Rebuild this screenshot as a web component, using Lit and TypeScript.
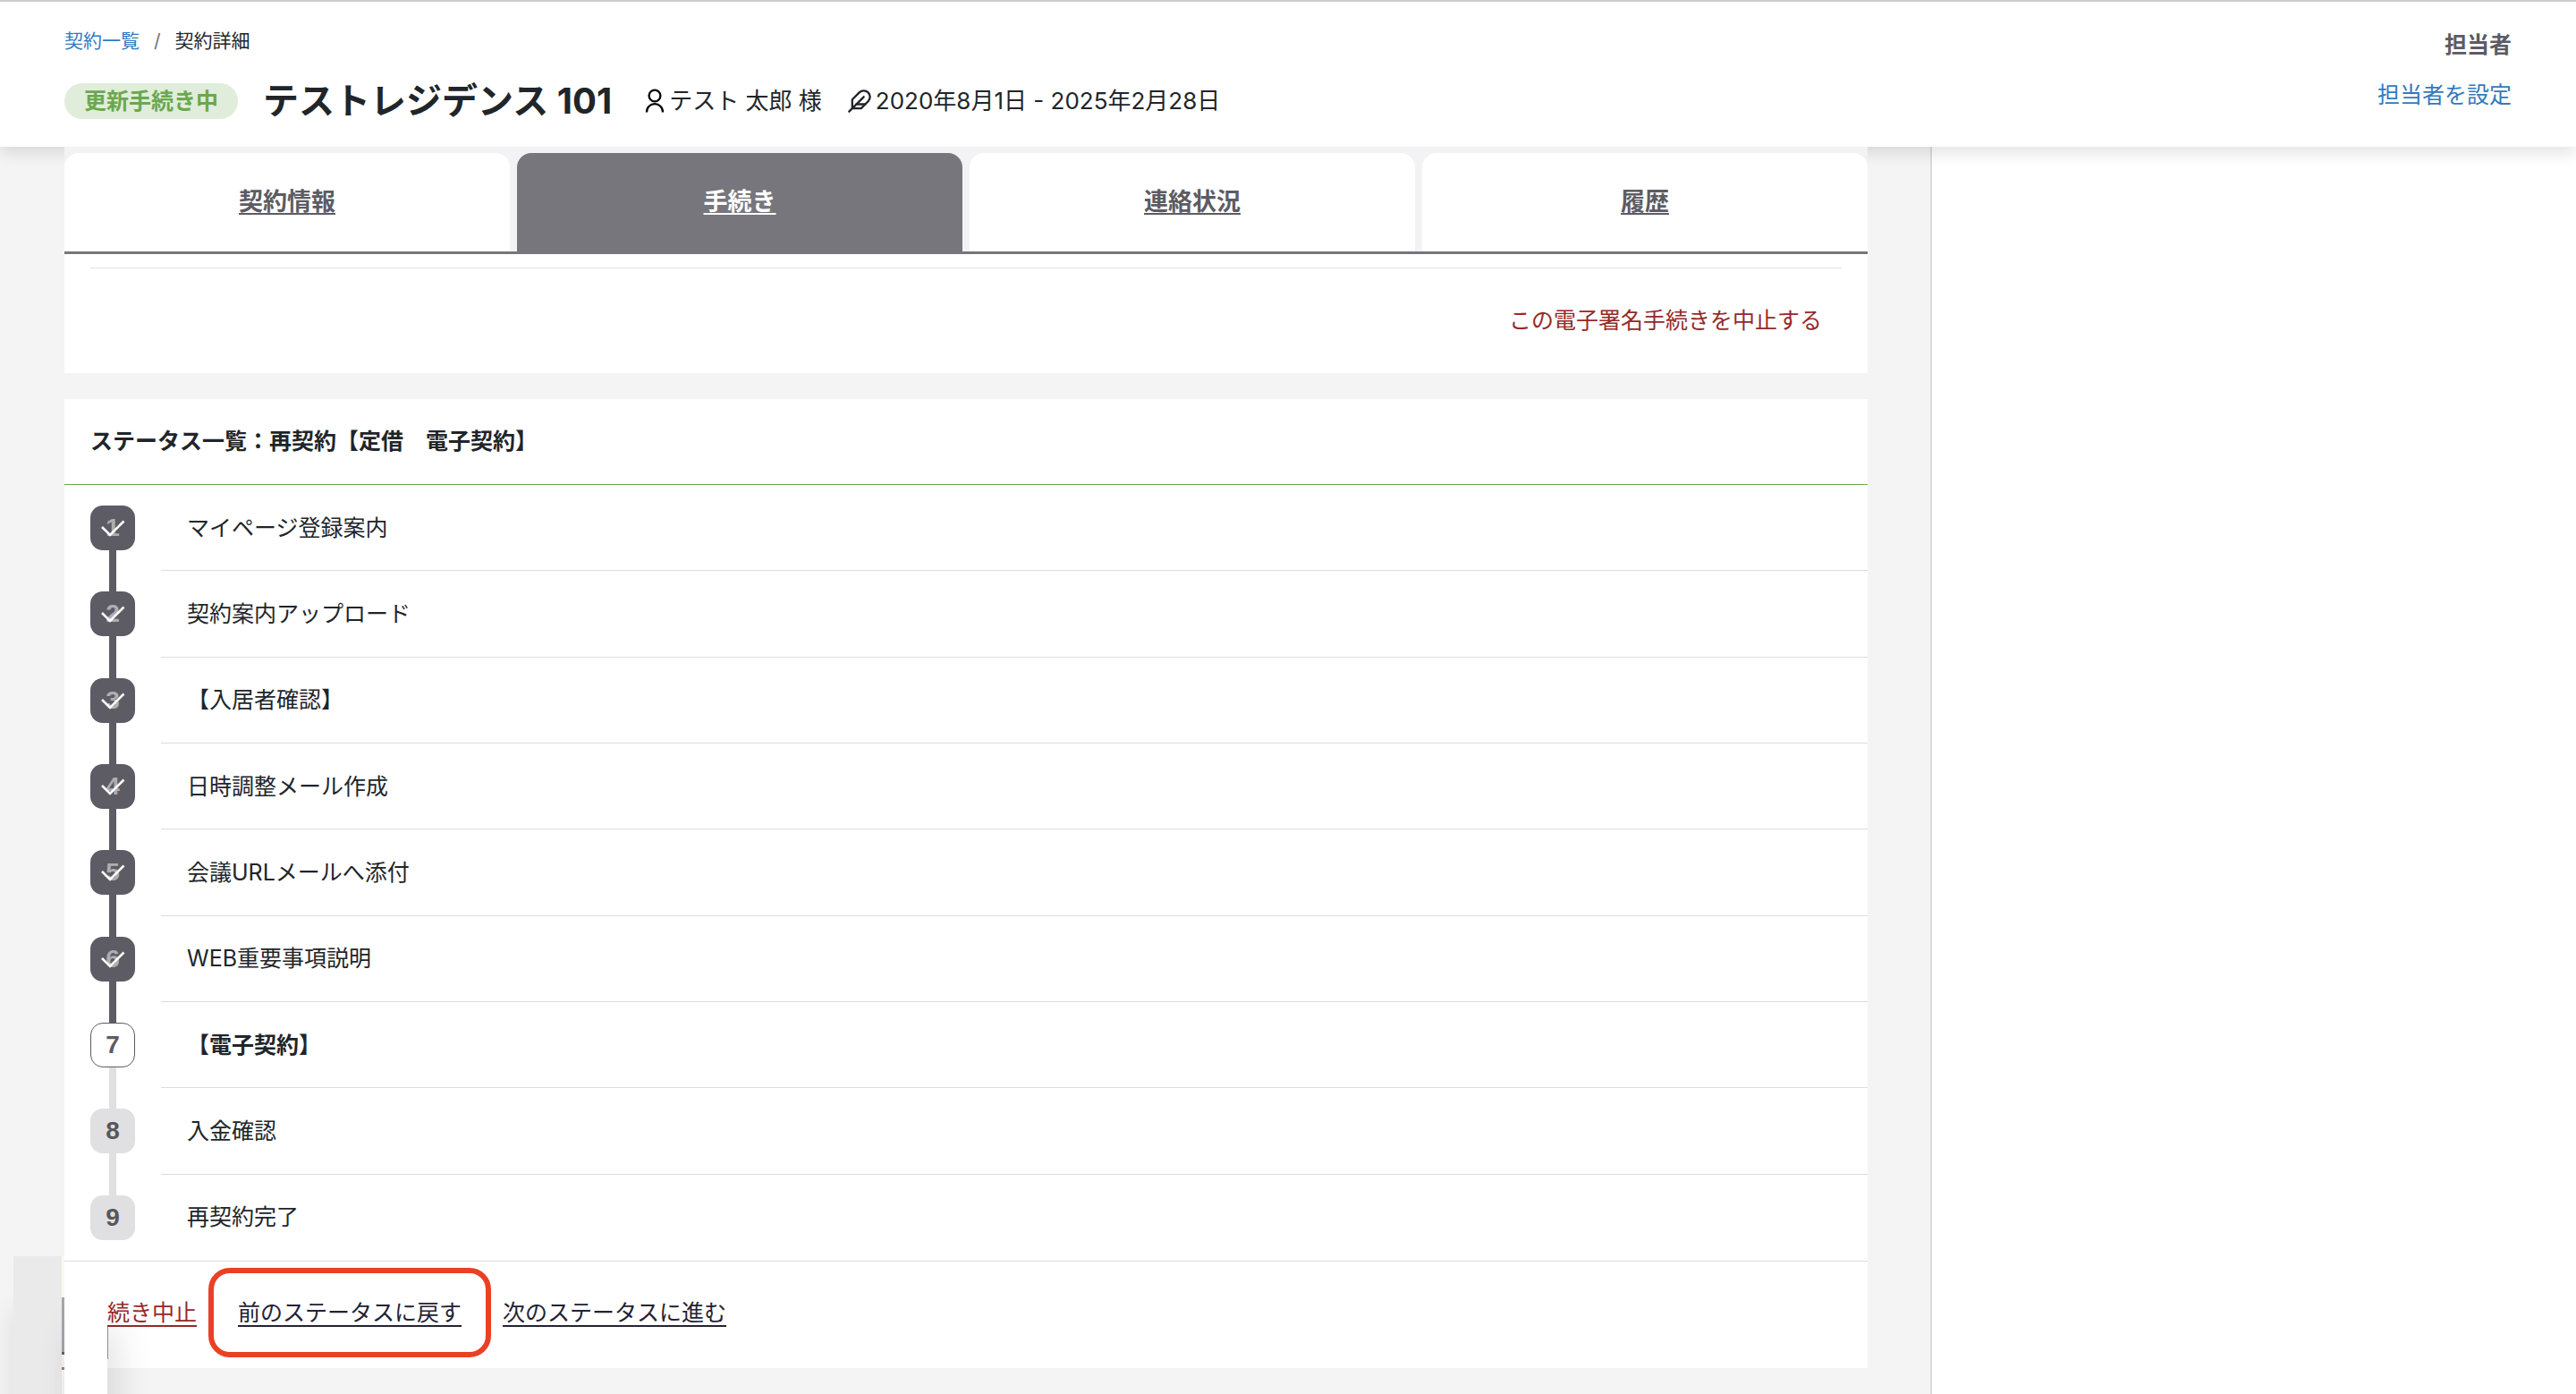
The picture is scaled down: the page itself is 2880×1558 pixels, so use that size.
import { LitElement, html, css, nothing } from "lit";
import { customElement, property } from "lit/decorators.js";
import { classMap } from "lit/directives/class-map.js";

type StepState = "done" | "current" | "todo";

interface Step {
  label: string;
  state: StepState;
}

const STEPS: Step[] = [
  { label: "マイページ登録案内", state: "done" },
  { label: "契約案内アップロード", state: "done" },
  { label: "【入居者確認】", state: "done" },
  { label: "日時調整メール作成", state: "done" },
  { label: "会議URLメールへ添付", state: "done" },
  { label: "WEB重要事項説明", state: "done" },
  { label: "【電子契約】", state: "current" },
  { label: "入金確認", state: "todo" },
  { label: "再契約完了", state: "todo" },
];

const TABS = ["契約情報", "手続き", "連絡状況", "履歴"];

@customElement("contract-header")
class ContractHeader extends LitElement {
  static styles = css`
    :host {
      display: block;
      position: relative;
      z-index: 1;
    }
    .bar {
      display: flex;
      justify-content: space-between;
      box-sizing: border-box;
      padding: 28px 72px 27px;
      border-top: 2px solid #ccc;
      background: #fff;
      box-shadow: 0 8px 16px rgba(0, 0, 0, 0.1);
    }
    .crumbs {
      display: flex;
      gap: 16px;
      margin: 0;
      padding: 0;
      list-style: none;
      font-size: 21px;
      line-height: 32px;
    }
    .crumbs li {
      display: flex;
      gap: 16px;
    }
    .slash {
      color: #6c757d;
    }
    a {
      color: #3379bd;
      text-decoration: none;
    }
    .summary {
      display: flex;
      align-items: center;
      margin-top: 27px;
      line-height: 48px;
    }
    .badge {
      padding: 0 22px;
      border-radius: 20px;
      background: #e0edda;
      color: #6aa84f;
      font-weight: 700;
      line-height: 40px;
    }
    h1 {
      margin: 0 36px 0 28px;
      font-size: 40px;
      line-height: 48px;
    }
    .meta {
      display: flex;
      align-items: center;
      margin-right: 28px;
      font-size: 26px;
    }
    .meta svg {
      display: block;
      margin-right: 4px;
    }
    .owner {
      display: flex;
      flex-direction: column;
      align-items: flex-end;
      gap: 16px;
      line-height: 40px;
    }
    .owner strong {
      color: #5d5b63;
    }
  `;

  render() {
    return html`
      <header class="bar">
        <div>
          <nav aria-label="パンくず">
            <ol class="crumbs">
              <li><a href="#list">契約一覧</a><span class="slash">/</span></li>
              <li>契約詳細</li>
            </ol>
          </nav>
          <div class="summary">
            <span class="badge">更新手続き中</span>
            <h1>テストレジデンス 101</h1>
            <span class="meta">
              <svg width="24" height="28" viewBox="0 0 24 28" fill="none" stroke="#000" stroke-width="2.3" aria-hidden="true">
                <circle cx="12" cy="8" r="6.4" />
                <path d="M3 26.5c0-5.6 4-9.3 9-9.3s9 3.7 9 9.3" />
              </svg>
              テスト 太郎 様
            </span>
            <span class="meta">
              <svg width="28" height="28" viewBox="0 0 24 24" fill="none" stroke="#212529" stroke-width="2" stroke-linecap="round" stroke-linejoin="round" aria-hidden="true">
                <path d="M20.24 12.24a6 6 0 0 0-8.49-8.49L5 10.5V19h8.5z" />
                <path d="M16 8 2 22" />
                <path d="M17.5 15H9" />
              </svg>
              2020年8月1日 - 2025年2月28日
            </span>
          </div>
        </div>
        <div class="owner">
          <strong>担当者</strong>
          <a href="#owner">担当者を設定</a>
        </div>
      </header>
    `;
  }
}

@customElement("contract-tabs")
class ContractTabs extends LitElement {
  static styles = css`
    :host {
      display: block;
      position: relative;
      z-index: 2;
    }
    .tabs {
      display: grid;
      grid-template-columns: repeat(4, 1fr);
      gap: 8px;
      padding-top: 7px;
      border-bottom: 3px solid #77767c;
      background: #f3f3f6;
    }
    a {
      padding: 35px 0;
      border-radius: 16px 16px 0 0;
      background: #fff;
      color: #5d5b63;
      font-size: 27px;
      font-weight: 700;
      line-height: 40px;
      text-align: center;
      text-underline-offset: 3px;
    }
    a.active {
      background: #77767c;
      color: #fff;
    }
  `;

  render() {
    return html`
      <nav class="tabs">
        ${TABS.map(
          (tab, i) => html`<a class=${classMap({ active: i === 1 })} href="#tab${i + 1}">${tab}</a>`
        )}
      </nav>
    `;
  }
}

@customElement("status-step")
class StatusStep extends LitElement {
  @property({ type: Number }) number = 1;
  @property() label = "";
  @property() state: StepState = "todo";
  @property({ type: Boolean }) last = false;

  static styles = css`
    :host {
      display: grid;
      grid-template-columns: 50px 1fr;
      column-gap: 29px;
      padding-left: 29px;
    }
    .track {
      display: flex;
      flex-direction: column;
      align-items: center;
      padding-top: 23px;
    }
    .mark {
      display: grid;
      place-items: center;
      box-sizing: border-box;
      width: 50px;
      height: 50px;
      flex: none;
      border-radius: 14px;
      background: #e0e0e2;
      color: #57575a;
      font: 700 28px/48px "Liberation Sans", Arial, sans-serif;
    }
    .mark > * {
      grid-area: 1 / 1;
    }
    .done .mark {
      background: #5d5b63;
      color: #aeadb1;
    }
    .current .mark {
      border: 1px solid #5d5b63;
      background: #fff;
      color: #5d5b63;
    }
    .line {
      width: 8px;
      flex: 1;
      margin-bottom: -23px;
      background: #e0e0e2;
    }
    .done .line {
      background: #5d5b63;
    }
    .label {
      display: flex;
      align-items: center;
      padding: 0 29px;
      border-bottom: 1px solid #dcdde0;
      line-height: 40px;
    }
    .label.strong {
      font-weight: 700;
    }
    .label.final {
      border-bottom-color: transparent;
    }
  `;

  render() {
    return html`
      <div class="track ${this.state}">
        <span class="mark">
          <span>${this.number}</span>
          ${this.state === "done"
            ? html`<svg width="50" height="50" viewBox="0 0 50 50" fill="none" stroke="#fff" stroke-width="2.6" aria-hidden="true">
                <path d="M13 24l9 9L37.500 17.500" />
              </svg>`
            : nothing}
        </span>
        ${this.last ? nothing : html`<span class="line"></span>`}
      </div>
      <div class=${classMap({ label: true, strong: this.state === "current", final: this.last })}>
        ${this.label}
      </div>
    `;
  }
}

@customElement("app-root")
class AppRoot extends LitElement {
  static styles = css`
    :host {
      display: flex;
      flex-direction: column;
      position: relative;
      min-height: 100vh;
      overflow: hidden;
      background: #f4f4f4;
      color: #212529;
      font-family: Inter, "Noto Sans CJK JP", sans-serif;
      font-size: 25px;
      line-height: 40px;
    }
    .body {
      display: grid;
      grid-template-columns: 3fr 1fr;
      flex: 1;
    }
    main {
      padding: 0 70px 0 72px;
      border-right: 2px solid #dcdcde;
    }
    aside {
      background: #fff;
    }
    .card {
      background: #fff;
    }
    .signing {
      padding: 15px 29px 39px;
    }
    .signing-inner {
      display: flex;
      justify-content: flex-end;
      padding: 38px 22px 0;
      border-top: 1px solid #e2e3e5;
    }
    .statuses {
      margin-top: 29px;
    }
    a {
      color: #232333;
    }
    .danger {
      color: #952928;
    }
    .plain {
      text-decoration: none;
    }
    h2 {
      margin: 0;
      padding: 27px 29px 28px;
      border-bottom: 1px solid #6aa84f;
      font-size: 25px;
      line-height: 40px;
    }
    .steps {
      display: grid;
      grid-auto-rows: 1fr;
      min-height: 867px;
      border-bottom: 1px solid #dcdde0;
    }
    .actions {
      display: flex;
      align-items: center;
      padding: 7px 48px 12px;
      text-underline-offset: 5px;
    }
    .framed {
      margin: 0 13px;
      padding: 24px 27px;
      border: 6px solid #ea4025;
      border-radius: 24px;
    }
    .actions a {
      text-decoration-thickness: 2px;
    }
    .peek {
      position: absolute;
      left: 15px;
      bottom: 0;
      display: flex;
      align-items: flex-end;
    }
    .peek-back {
      width: 54px;
      height: 154px;
      background: #eaeaea;
      box-shadow: 0 60px 28px rgba(0, 0, 0, 0.1);
    }
    .peek-edge {
      display: grid;
      grid-template-rows: 46px 61px 20px 8px 8px 11px;
      width: 3px;
      height: 154px;
      background: #f4f4f4;
    }
    .edge-bar {
      grid-row: 2;
      background: #a5a4ac;
    }
    .edge-gap {
      background: #fbf8ef;
    }
    .edge-dots {
      border-top: 3px solid #6d6252;
      border-bottom: 3px solid #a1806f;
    }
    .peek-front {
      width: 48px;
      height: 135px;
      background: #fff;
      box-shadow: 10px 60px 40px rgba(0, 0, 0, 0.12);
    }
    .peek-shade {
      align-self: flex-start;
      width: 1px;
      height: 36px;
      margin-top: 79px;
      background: #8d8d92;
    }
  `;

  render() {
    return html`
      <contract-header></contract-header>
      <div class="body">
        <main>
          <contract-tabs></contract-tabs>
          <section class="card signing">
            <div class="signing-inner">
              <a class="danger plain" href="#cancel-signing">この電子署名手続きを中止する</a>
            </div>
          </section>
          <section class="card statuses">
            <h2>ステータス一覧：再契約【定借　電子契約】</h2>
            <div class="steps">
              ${STEPS.map(
                (step, i) => html`<status-step
                  .number=${i + 1}
                  .label=${step.label}
                  .state=${step.state}
                  .last=${i === STEPS.length - 1}
                ></status-step>`
              )}
            </div>
            <div class="actions">
              <a class="danger" href="#cancel">続き中止</a>
              <span class="framed"><a href="#back">前のステータスに戻す</a></span>
              <a href="#next">次のステータスに進む</a>
            </div>
          </section>
        </main>
        <aside></aside>
      </div>
      <div class="peek" aria-hidden="true">
        <span class="peek-back"></span>
        <span class="peek-edge">
          <span class="edge-bar"></span>
          <span class="edge-gap"></span>
          <span class="edge-dots"></span>
          <span class="edge-gap"></span>
        </span>
        <span class="peek-front"></span>
        <span class="peek-shade"></span>
      </div>
    `;
  }
}
